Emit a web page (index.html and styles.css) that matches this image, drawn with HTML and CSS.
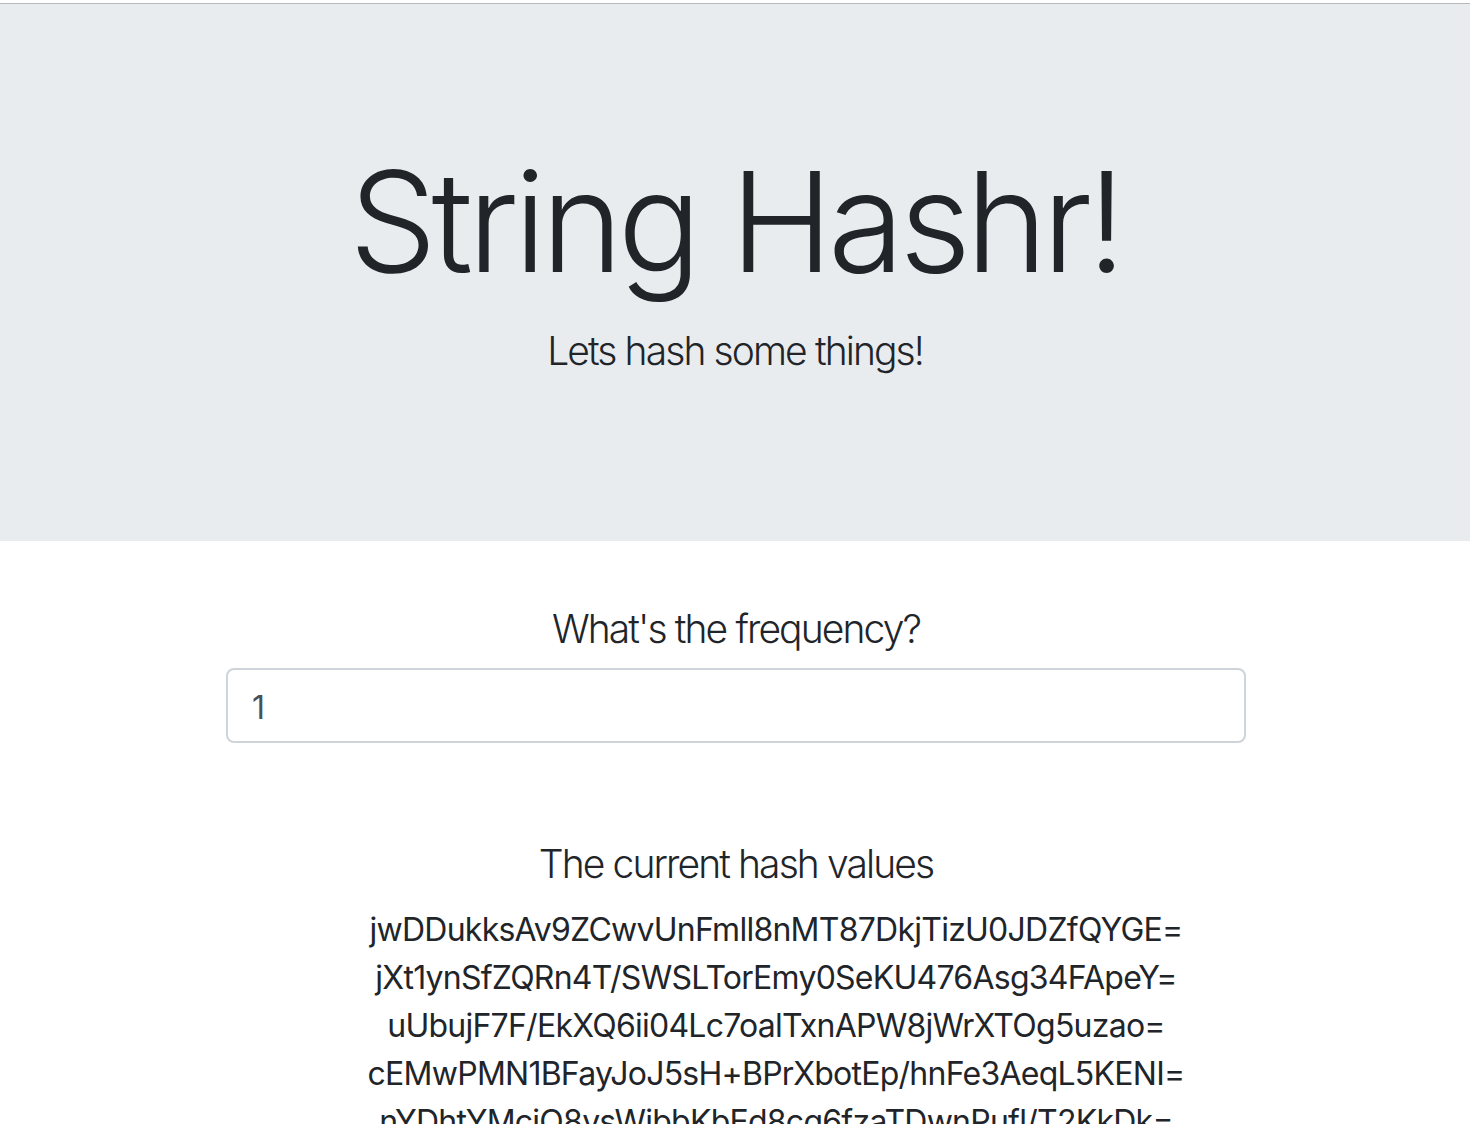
FILE: index.html
```html
<!DOCTYPE html>
<html lang="en">
<head>
<meta charset="utf-8">
<title>String Hashr!</title>
<link rel="stylesheet" href="styles.css">
</head>
<body>
<div class="jumbotron">
  <h1 class="display">String Hashr!</h1>
  <p class="lead">Lets hash some things!</p>
</div>
<main class="container">
  <div class="form-group">
    <label class="freq-label" for="freq">What's the frequency?</label>
    <input class="form-control" id="freq" type="text" value="1">
  </div>
  <section class="hashes">
    <h2 class="hash-title">The current hash values</h2>
    <ul class="hash-list">
      <li>jwDDukksAv9ZCwvUnFmll8nMT87DkjTizU0JDZfQYGE=</li>
      <li>jXt1ynSfZQRn4T/SWSLTorEmy0SeKU476Asg34FApeY=</li>
      <li>uUbujF7F/EkXQ6ii04Lc7oalTxnAPW8jWrXTOg5uzao=</li>
      <li>cEMwPMN1BFayJoJ5sH+BPrXbotEp/hnFe3AeqL5KENI=</li>
      <li>nYDhtYMcjO8vsWibbKbEd8cg6fzaTDwnPufl/T2KkDk=</li>
      <li>Q2Lm8YwVb0T7pXk3nRzH1sJdFqAeUo9iGtC5yNhBvKw=</li>
    </ul>
  </section>
</main>
</body>
</html>
```

FILE: styles.css
```css
html, body {
  margin: 0;
  padding: 0;
}
body {
  padding-top: 3px;
  font-family: Inter, "Noto Sans", "Liberation Sans", sans-serif;
  font-size: 32px;
  line-height: 1.5;
  color: #212529;
  background: #fff;
}
.jumbotron {
  background: #e9ecef;
  border-top: 1px solid #b9babb;
  padding: 128px 0;
  margin-bottom: 64px;
  text-align: center;
}
.display {
  margin: 0 0 16px;
  font-size: 139px;
  font-weight: 300;
  line-height: 172.8px;
  letter-spacing: -5.2px;
  padding-top: 4px;
  height: 168.8px;
}
.lead {
  margin: 0 0 32px;
  font-size: 39px;
  font-weight: 300;
  line-height: 60px;
  letter-spacing: -1.9px;
}
.container {
  width: 1020px;
  margin: 0 auto;
  padding-left: 2px;
}
.form-group {
  display: flex;
  flex-direction: column;
  margin-bottom: 97px;
}
.freq-label {
  text-align: center;
  font-size: 39px;
  font-weight: 300;
  line-height: 48px;
  letter-spacing: -1.9px;
  margin-bottom: 15px;
}
.form-control {
  box-sizing: border-box;
  height: 75px;
  width: 100%;
  padding: 15px 24px 10px;
  font-family: inherit;
  font-size: 32px;
  color: #495057;
  background: #fff;
  border: 2px solid #ced4da;
  border-radius: 8px;
  outline: none;
}
.hash-title {
  margin: 0 0 18px;
  text-align: center;
  font-size: 39px;
  font-weight: 300;
  line-height: 48px;
  letter-spacing: -1.9px;
}
.hash-list {
  list-style: none;
  margin: 0;
  padding-left: 80px;
  text-align: center;
  font-size: 32px;
  line-height: 48px;
  letter-spacing: -0.75px;
}
```
